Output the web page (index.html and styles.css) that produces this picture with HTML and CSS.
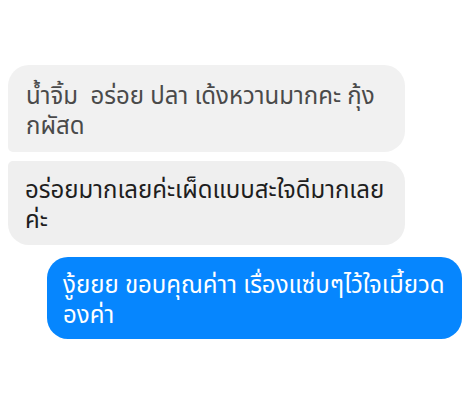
FILE: index.html
```html
<!DOCTYPE html>
<html lang="th">
<head>
<meta charset="utf-8">
<link rel="stylesheet" href="styles.css">
</head>
<body>
<div class="chat">
  <div class="bubble received first muted">น้ำจิ้ม&nbsp; อร่อย ปลา เด้งหวานมากคะ กุ้ง<br>กผัสด</div>
  <div class="bubble received last">อร่อยมากเลยค่ะเผ็ดแบบสะใจดีมากเลย<br>ค่ะ</div>
  <div class="bubble sent">งู้ยยย ขอบคุณค่าา เรื่องแซ่บๆไว้ใจเมี้ยวด<br>องค่า</div>
</div>
</body>
</html>
```

FILE: styles.css
```css
html, body {
  margin: 0;
  padding: 0;
  background: #ffffff;
}

.chat {
  display: flex;
  flex-direction: column;
  padding: 65px 6px 0 8px;
  font-family: "Noto Sans Thai", "Noto Sans", "Liberation Sans", sans-serif;
  font-size: 24px;
  line-height: 30px;
}

.bubble {
  box-sizing: border-box;
  padding: 17px 18px 10px;
  border-radius: 21px;
  white-space: nowrap;
}

.received {
  width: 397px;
  background: #f1f1f1;
  color: #1e1e1e;
  align-self: flex-start;
}

.received.first {
  border-bottom-left-radius: 5px;
}

.received.last {
  margin-top: 9px;
  border-top-left-radius: 5px;
  padding-top: 15px;
  padding-bottom: 9px;
  padding-left: 17px;
  background: #efefef;
}

.muted {
  color: #4a4a4a;
}

.sent {
  width: 415px;
  margin-top: 12px;
  align-self: flex-end;
  background: #0686fe;
  color: #ffffff;
  padding: 14px 16px 8px;
}
```
